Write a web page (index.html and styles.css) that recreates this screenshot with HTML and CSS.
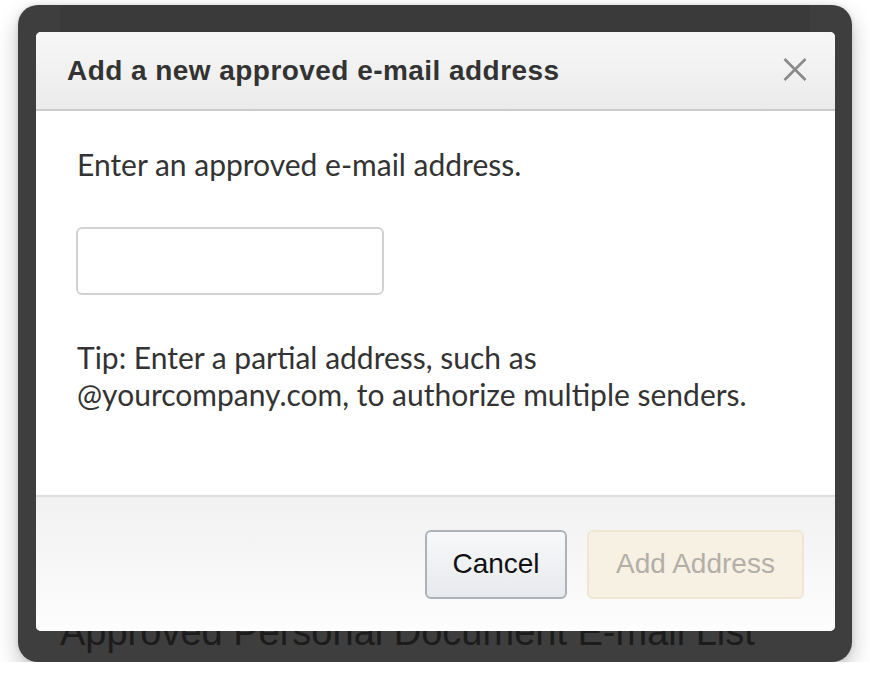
FILE: index.html
```html
<!DOCTYPE html>
<html lang="en">
<head>
<meta charset="utf-8">
<title>Add a new approved e-mail address</title>
<link rel="stylesheet" href="styles.css">
</head>
<body>
<div class="window">
  <div class="page">
    <div class="topbar"></div>
    <h1 class="page-title">Approved Personal Document E-mail List</h1>
  </div>
  <div class="modal" role="dialog" aria-labelledby="dlg-title">
    <div class="modal-header">
      <h2 class="modal-title" id="dlg-title">Add a new approved e-mail address</h2>
      <button class="close" aria-label="Close">
        <svg width="24" height="23" viewBox="0 0 24 23"><path d="M1.5 1 L22.5 22 M22.5 1 L1.5 22" stroke="#8a8a8a" stroke-width="2.6" fill="none"/></svg>
      </button>
    </div>
    <div class="modal-body">
      <p class="label">Enter an approved e-mail address.</p>
      <input class="email" type="text" aria-label="E-mail address">
      <p class="tip">Tip: Enter a partial address, such as<br>@yourcompany.com, to authorize multiple senders.</p>
    </div>
    <div class="modal-footer">
      <button class="btn btn-cancel">Cancel</button>
      <button class="btn btn-add" disabled>Add Address</button>
    </div>
  </div>
</div>
</body>
</html>
```
FILE: styles.css
```css
html, body {
  margin: 0;
  padding: 0;
  background: #ffffff;
}
body {
  padding: 5px 18px 0 18px;
  font-family: "Liberation Sans", Arial, sans-serif;
}
.window {
  width: 834px;
  height: 657px;
  border-radius: 20px;
  background: #3e3e3e;
  box-shadow: 0 10px 22px rgba(0, 0, 0, 0.24), 0 0 5px rgba(0, 0, 0, 0.12);
  overflow: hidden;
  display: grid;
}
.page {
  grid-area: 1 / 1;
  display: flex;
  flex-direction: column;
  justify-content: space-between;
  padding: 0 42px 8px 42px;
}
.topbar {
  height: 27px;
  background: #3a3a3a;
}
.page-title {
  margin: 0;
  font-family: "Liberation Sans", Arial, sans-serif;
  font-weight: normal;
  font-size: 38px;
  line-height: 44px;
  color: #1c1c1c;
}
.modal {
  grid-area: 1 / 1;
  margin: 27px 17px 31px 18px;
  background: #ffffff;
  border-radius: 5px;
  display: flex;
  flex-direction: column;
  overflow: hidden;
}
.modal-header {
  box-sizing: border-box;
  height: 79px;
  flex: none;
  border-bottom: 2px solid #cbcbcb;
  background: linear-gradient(#f7f7f7, #ebebeb);
  display: flex;
  align-items: center;
  justify-content: space-between;
  padding: 0 28px 0 31px;
}
.modal-title {
  margin: 0;
  font-family: "Liberation Sans", Arial, sans-serif;
  font-weight: bold;
  font-size: 28px;
  letter-spacing: 0.45px;
  color: #333333;
}
.close {
  border: 0;
  background: transparent;
  padding: 0;
  width: 24px;
  height: 23px;
  display: flex;
  margin-top: -2px;
}
.modal-body {
  flex: 1;
  padding: 35px 40px 0 41px;
  font-family: Lato, "Open Sans", sans-serif;
  font-size: 30px;
  line-height: 37px;
  color: #333333;
}
.label {
  margin: 0 0 44px 0;
}
.email {
  display: block;
  box-sizing: border-box;
  width: 308px;
  height: 68px;
  margin: 0 0 44px -1px;
  border: 2px solid #d2d2d2;
  border-radius: 6px;
  background: #fff;
}
.tip {
  margin: 0;
}
.modal-footer {
  box-sizing: border-box;
  height: 136px;
  flex: none;
  border-top: 2px solid #dddddd;
  background: linear-gradient(#f1f1f1, #fdfdfd);
  display: flex;
  align-items: center;
  justify-content: flex-end;
  gap: 20px;
  padding: 0 31px 0 0;
}
.btn {
  box-sizing: border-box;
  height: 69px;
  border-radius: 6px;
  font-family: "Liberation Sans", Arial, sans-serif;
  font-size: 28px;
  padding: 0;
}
.btn-cancel {
  width: 142px;
  border: 2px solid #adb1b8;
  background: linear-gradient(#f7f8fa, #e7e9ec);
  color: #111111;
}
.btn-add {
  width: 217px;
  border: 2px solid #efe6d3;
  background: #f7f1e4;
  color: #b3afa7;
}
```
